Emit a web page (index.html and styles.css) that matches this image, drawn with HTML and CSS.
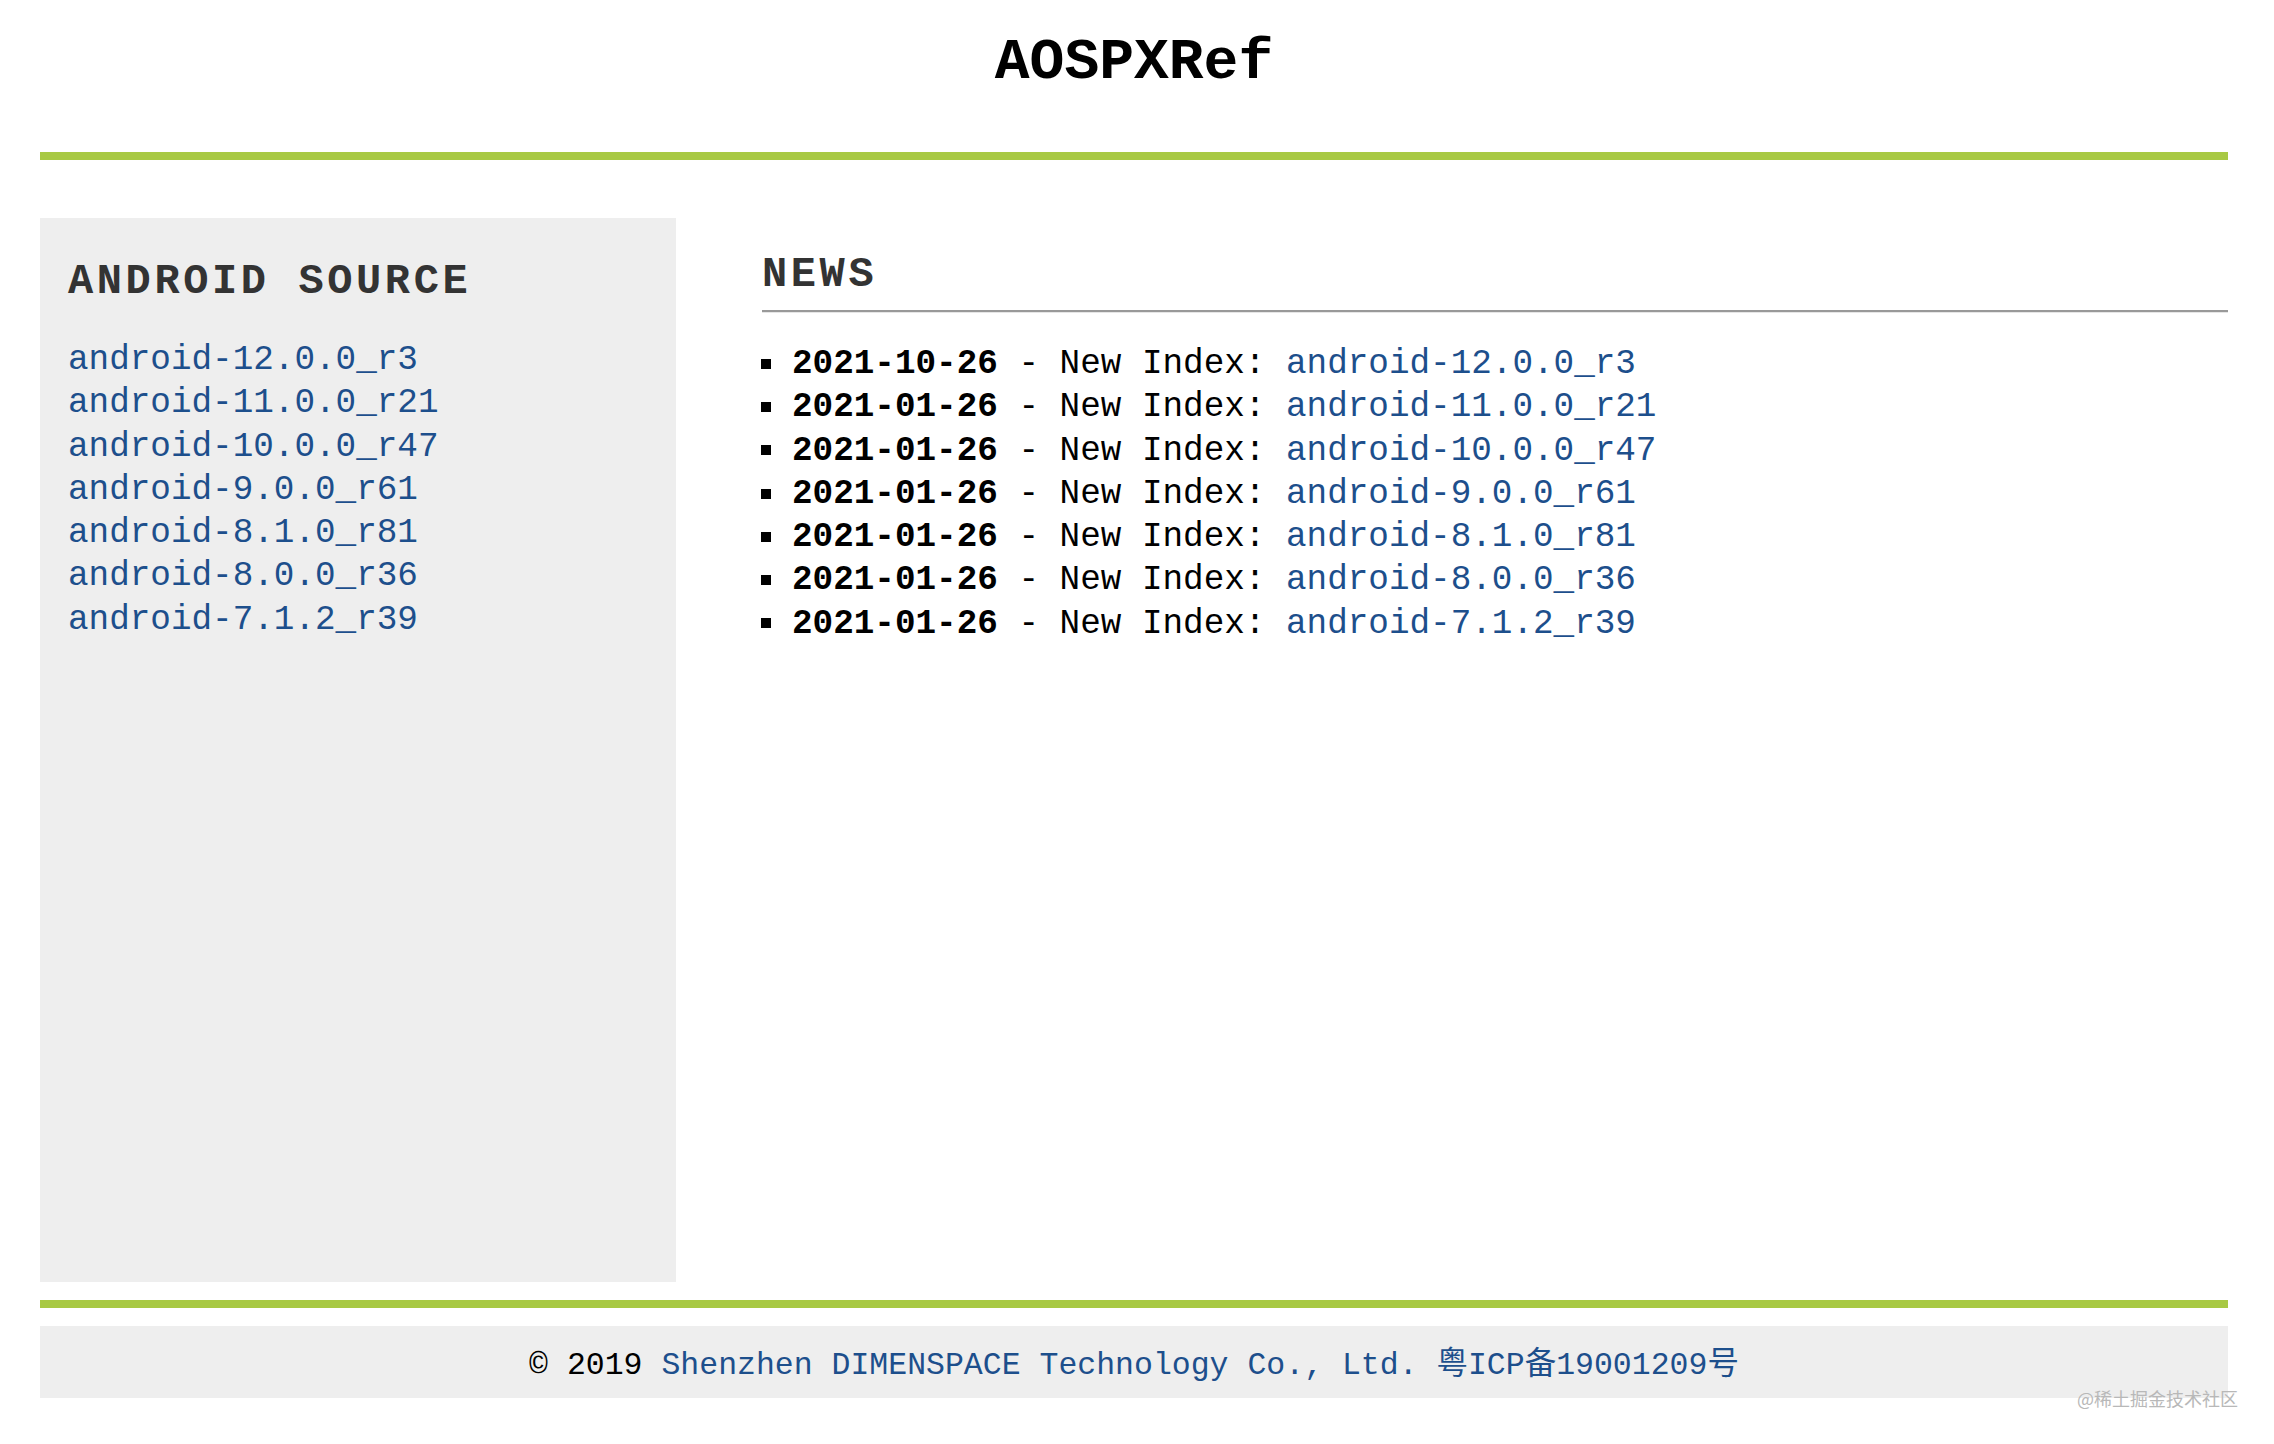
FILE: index.html
```html
<!DOCTYPE html>
<html lang="en">
<head>
<meta charset="utf-8">
<title>AOSPXRef</title>
<link rel="stylesheet" href="styles.css">
</head>
<body>
<div class="page">
  <header class="header">
    <h1 class="title">AOSPXRef</h1>
  </header>
  <div class="bar"></div>
  <main class="main">
    <aside class="sidebar">
      <h2 class="side-title">ANDROID SOURCE</h2>
      <ul class="side-list">
        <li><a href="#">android-12.0.0_r3</a></li>
        <li><a href="#">android-11.0.0_r21</a></li>
        <li><a href="#">android-10.0.0_r47</a></li>
        <li><a href="#">android-9.0.0_r61</a></li>
        <li><a href="#">android-8.1.0_r81</a></li>
        <li><a href="#">android-8.0.0_r36</a></li>
        <li><a href="#">android-7.1.2_r39</a></li>
      </ul>
    </aside>
    <section class="news">
      <h2 class="news-title">NEWS</h2>
      <hr class="rule">
      <ul class="news-list">
        <li><b>2021-10-26</b> - New Index: <a href="#">android-12.0.0_r3</a></li>
        <li><b>2021-01-26</b> - New Index: <a href="#">android-11.0.0_r21</a></li>
        <li><b>2021-01-26</b> - New Index: <a href="#">android-10.0.0_r47</a></li>
        <li><b>2021-01-26</b> - New Index: <a href="#">android-9.0.0_r61</a></li>
        <li><b>2021-01-26</b> - New Index: <a href="#">android-8.1.0_r81</a></li>
        <li><b>2021-01-26</b> - New Index: <a href="#">android-8.0.0_r36</a></li>
        <li><b>2021-01-26</b> - New Index: <a href="#">android-7.1.2_r39</a></li>
      </ul>
    </section>
  </main>
  <div class="bar bar-bottom"></div>
  <footer class="footer">
    <span class="copy">© 2019 <a href="#">Shenzhen DIMENSPACE Technology Co., Ltd.</a> <a href="#" class="icp">粤ICP备19001209号</a></span>
  </footer>
</div>
<div class="watermark">@稀土掘金技术社区</div>
</body>
</html>
```

FILE: styles.css
```css
html, body {
  margin: 0;
  padding: 0;
  background: #ffffff;
}

body {
  font-family: "Liberation Mono", "Courier New", "Noto Sans CJK SC", monospace;
  color: #000;
  width: 2274px;
  min-height: 1444px;
  position: relative;
}

a {
  color: #1d4f8c;
  text-decoration: none;
}

ul {
  list-style: none;
  margin: 0;
  padding: 0;
}

.page {
  padding: 0 46px 0 40px;
}

.header {
  height: 152px;
  box-sizing: border-box;
  padding-top: 30px;
}

.title {
  margin: 0;
  text-align: center;
  font-size: 58px;
  line-height: 66px;
  font-weight: bold;
  color: #000;
}

.bar {
  height: 8px;
  background: #a8c944;
}

.main {
  display: flex;
  margin-top: 58px;
  height: 1064px;
}

.sidebar {
  width: 636px;
  flex: none;
  background: #eeeeee;
  box-sizing: border-box;
  padding: 39px 0 0 28px;
}

.side-title,
.news-title {
  margin: 0;
  font-size: 42px;
  line-height: 50px;
  letter-spacing: 3.6px;
  font-weight: bold;
  color: #333;
}

.side-list {
  margin-top: 31px;
}

.side-list li,
.news-list li {
  font-size: 34.3px;
  line-height: 43.3px;
  white-space: pre;
}

.news {
  flex: 1;
  margin-left: 86px;
  padding-top: 32px;
}

.rule {
  margin: 10px 0 0 0;
  height: 0;
  border: 0;
  border-top: 2px solid #999;
  border-bottom: 1px solid #e6e6e6;
}

.news-list {
  margin-top: 29px;
}

.news-list li {
  display: flex;
  align-items: center;
}

.news-list li::before {
  content: "";
  width: 10px;
  height: 10px;
  background: #000;
  margin-left: -1px;
  margin-right: 21px;
  flex: none;
}

.news-list li b {
  font-weight: bold;
}

.bar-bottom {
  margin-top: 18px;
}

.footer {
  margin-top: 18px;
  height: 72px;
  background: #eeeeee;
  display: flex;
  align-items: center;
  justify-content: center;
  padding-top: 8px;
  box-sizing: border-box;
}

.copy {
  font-size: 31.5px;
  line-height: 40px;
  color: #000;
  white-space: nowrap;
}

.icp {
  font-family: "Liberation Mono", "Noto Sans CJK SC", monospace;
}

.watermark {
  position: absolute;
  right: 36px;
  top: 1386px;
  font-family: "Noto Sans CJK SC", sans-serif;
  font-size: 18px;
  line-height: 24px;
  color: #b8b8b8;
}
```
